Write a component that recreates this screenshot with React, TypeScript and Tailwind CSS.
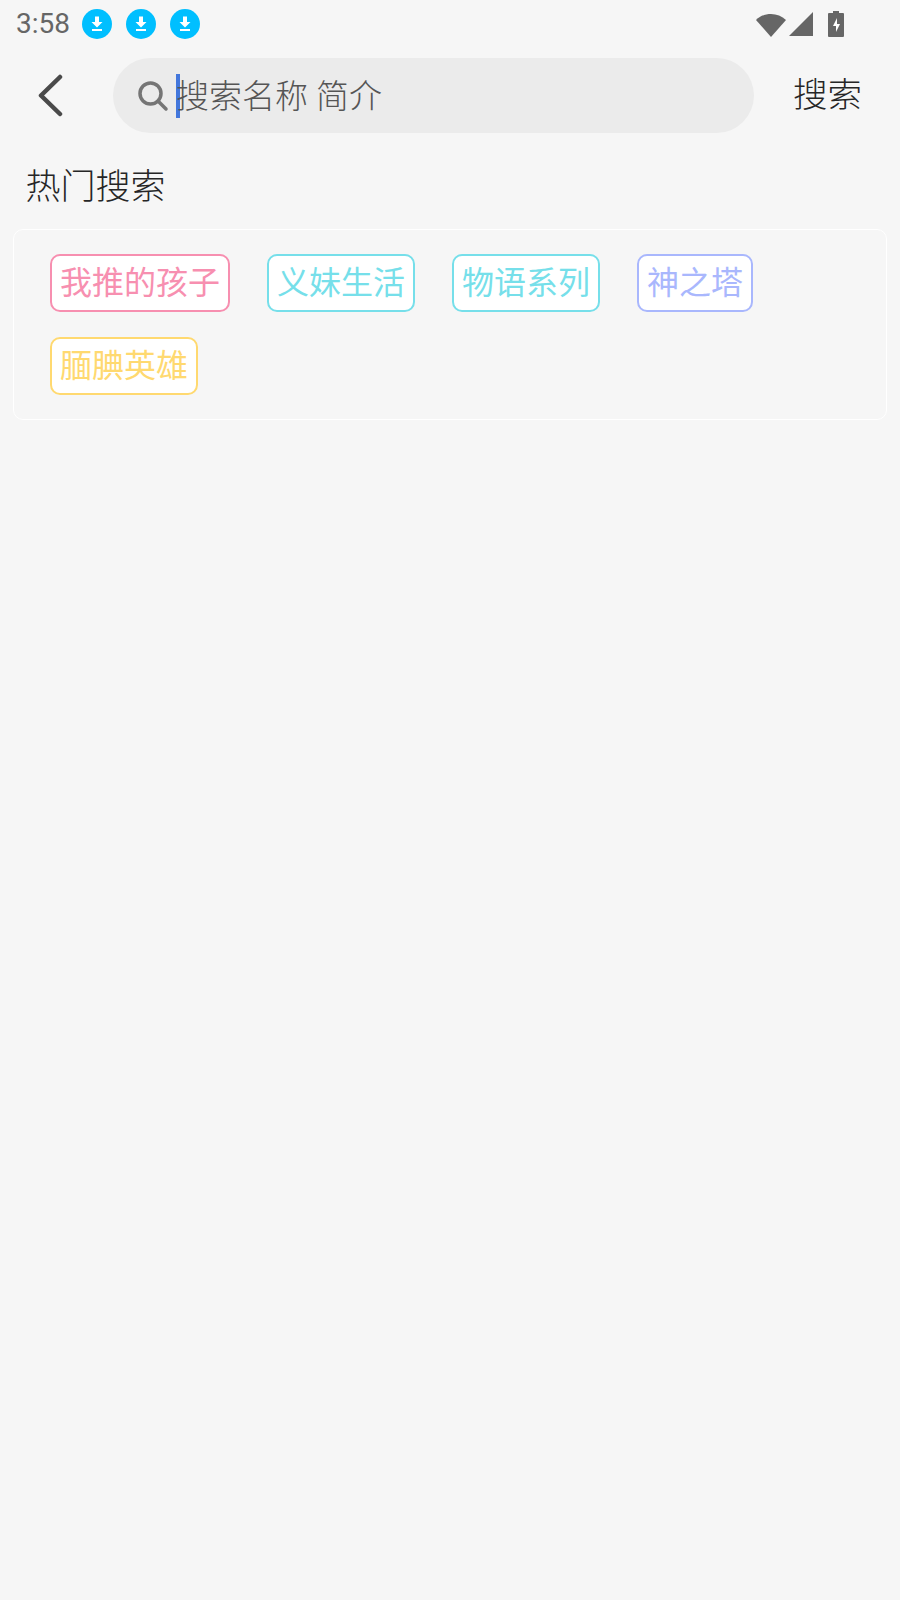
const cjk = "font-['Roboto','Noto_Sans_CJK_SC',sans-serif]";

const row1 = [
  { label: "我推的孩子", cls: "border-[#f78fb0] text-[#f78fb0]", gap: "mr-[37px]" },
  { label: "义妹生活", cls: "border-[#76dfea] text-[#76dfea]", gap: "mr-[37px]" },
  { label: "物语系列", cls: "border-[#76dfea] text-[#76dfea]", gap: "mr-[37px]" },
  { label: "神之塔", cls: "border-[#a9b7fd] text-[#a9b7fd]", gap: "" },
];

const Tag = ({ label, cls, gap }: { label: string; cls: string; gap: string }) => (
  <div
    className={`flex h-[58px] items-center rounded-[10px] border-2 bg-white px-2 text-[32px] leading-none ${cls} ${gap}`}
  >
    {label}
  </div>
);

const Download = () => (
  <svg width="30" height="30" viewBox="0 0 30 30">
    <circle cx="15" cy="15" r="15" fill="#00bfff" />
    <path d="M13 7.500h4v5.500h3.500L15 18.500 9.500 13H13z" fill="#fff" />
    <rect x="10" y="20" width="10" height="2" fill="#fff" />
  </svg>
);

export default function App() {
  return (
    <div className={`min-h-[1600px] w-[900px] bg-[#f6f6f6] ${cjk}`}>
      {/* status bar */}
      <div className="flex h-[48px] items-center justify-between pl-4 pr-[56px]">
        <div className="flex items-center">
          <span className="w-[66px] text-[28px] font-[450] leading-none text-[#666666]">3:58</span>
          <div className="flex gap-[14px]">
            <Download />
            <Download />
            <Download />
          </div>
        </div>
        <div className="flex items-center gap-[15px]">
          <div className="flex items-center gap-[3px]">
            <svg width="30" height="25" viewBox="0 0 30 25">
              <path d="M0 8C8 0 22 0 30 8L15 25z" fill="#666666" />
            </svg>
            <svg width="24" height="24" viewBox="0 0 24 24">
              <path d="M24 0v24H0z" fill="#666666" />
            </svg>
          </div>
          <svg width="16" height="26" viewBox="0 0 16 26">
            <path d="M5 0h6v2h4a1 1 0 0 1 1 1v22a1 1 0 0 1-1 1H1a1 1 0 0 1-1-1V3a1 1 0 0 1 1-1h4z" fill="#666666" />
            <path d="M9 7l-4 8h3v6l4-8H9z" fill="#fff" />
          </svg>
        </div>
      </div>

      {/* search row */}
      <div className="mt-[10px] flex h-[75px] items-center">
        <div className="flex w-[113px] pl-[37px]">
          <svg width="27" height="43" viewBox="0 0 27 43" fill="none">
            <path d="M23 3L4 21.500 23 40" stroke="#4a4a4a" strokeWidth="4.500" strokeLinecap="round" strokeLinejoin="round" />
          </svg>
        </div>
        <div className="flex h-[75px] w-[641px] items-center rounded-full bg-[#ebebeb] pl-[24px]">
          <svg width="32" height="32" viewBox="0 0 32 32" fill="none">
            <circle cx="13.500" cy="13.500" r="10.500" stroke="#757575" strokeWidth="3.500" />
            <path d="M21 21l8 8" stroke="#757575" strokeWidth="3.500" strokeLinecap="round" />
          </svg>
          <div className="ml-[7px] h-[44px] w-1 bg-[#4377dc]" />
          <span className="-ml-[4px] pt-[1px] text-[33px] font-light leading-none text-[#555555]">搜索名称 简介</span>
        </div>
        <span className="ml-[39px] text-[34.500px] font-light leading-none text-[#262626]">搜索</span>
      </div>

      {/* hot searches */}
      <div className="mt-[32px] pl-[25.500px] text-[35px] font-light leading-[46px] text-[#262626]">热门搜索</div>
      <div className="mx-[13px] mt-[18px] h-[191px] rounded-[10px] border border-white pl-[36px] pt-[24px]">
        <div className="flex">
          {row1.map((t) => (
            <Tag key={t.label} label={t.label} cls={t.cls} gap={t.gap} />
          ))}
        </div>
        <div className="mt-[25px] flex">
          <Tag label="腼腆英雄" cls="border-[#ffd970] text-[#ffd970]" gap="" />
        </div>
      </div>
    </div>
  );
}
